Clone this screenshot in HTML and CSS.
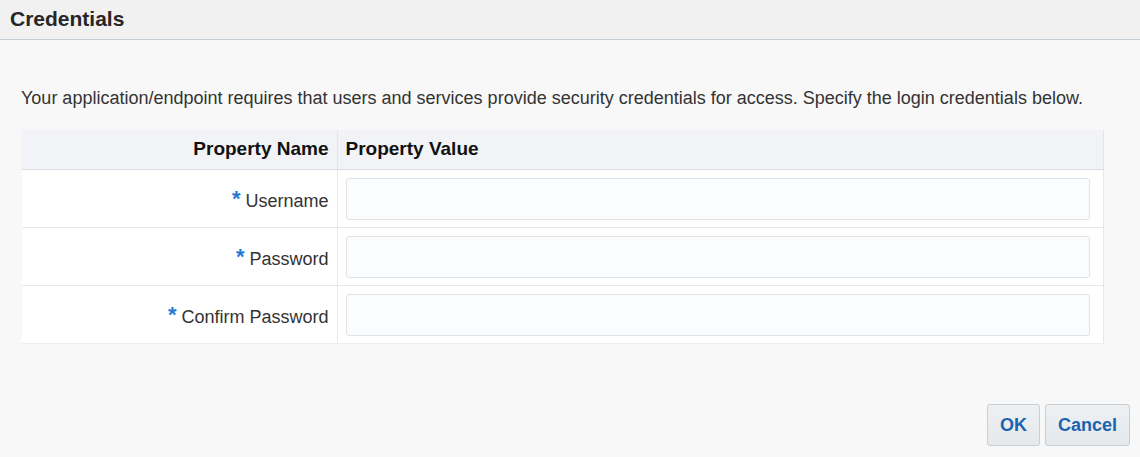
FILE: index.html
```html
<!DOCTYPE html>
<html>
<head>
<meta charset="utf-8">
<link rel="stylesheet" href="styles.css">
</head>
<body>
<div class="dialog">
  <div class="titlebar"><h1 class="title">Credentials</h1></div>
  <div class="content">
    <p class="intro">Your application/endpoint requires that users and services provide security credentials for access. Specify the login credentials below.</p>
    <table class="props">
      <thead>
        <tr><th class="c-name">Property Name</th><th class="c-value">Property Value</th></tr>
      </thead>
      <tbody>
        <tr><td class="c-name"><span class="req">*</span> Username</td><td class="c-value"><input class="field" type="text"></td></tr>
        <tr><td class="c-name"><span class="req">*</span> Password</td><td class="c-value"><input class="field" type="password"></td></tr>
        <tr><td class="c-name"><span class="req">*</span> Confirm Password</td><td class="c-value"><input class="field" type="password"></td></tr>
      </tbody>
    </table>
  </div>
  <div class="actions">
    <button class="btn btn-ok">OK</button>
    <button class="btn btn-cancel">Cancel</button>
  </div>
</div>
</body>
</html>
```
FILE: styles.css
```css
* { box-sizing: border-box; }
html, body { margin: 0; padding: 0; }
body {
  background: #f8f8f8;
  font-family: "Liberation Sans", Arial, sans-serif;
  color: #333;
  width: 1140px;
  height: 457px;
  overflow: hidden;
}
.dialog { display: flex; flex-direction: column; height: 457px; }
.titlebar {
  height: 40px;
  background: #f1f1f1;
  border-bottom: 1px solid #c5cfd8;
  padding: 0 10px;
  display: flex;
  align-items: center;
}
.title {
  margin: 0;
  font-size: 21px;
  font-weight: bold;
  color: #262626;
  position: relative;
  top: -1px;
}
.content { padding: 48px 36px 0 22px; }
.intro {
  margin: 0 0 22px -1px;
  font-size: 18px;
  line-height: 20px;
  color: #333;
}
.props {
  width: 1082px;
  border-collapse: collapse;
  background: #fff;
}
.props th {
  background: #f1f3f7;
  height: 39px;
  font-size: 19px;
  font-weight: bold;
  color: #111;
  border-bottom: 1px solid #d6dde3;
  padding: 0 8px;
}
.props th.c-name { text-align: right; width: 315px; border-right: 1px solid #e2e6ea; }
.props th.c-value { text-align: left; border-right: 1px solid #e2e6ea; }
.props td {
  height: 58px;
  border-bottom: 1px solid #e6e8ea;
  padding: 0 8px;
  font-size: 18px;
  color: #333;
}
.props td.c-name { text-align: right; border-right: 1px solid #e6e8ea; padding-top: 4px; }
.props td.c-value { border-right: 1px solid #e6e8ea; padding-right: 13px; padding-top: 1px; }
.props tbody tr:last-child td { border-bottom: 1px solid #eceeef; }
.req { color: #1f7bd6; font-size: 22px; font-weight: bold; vertical-align: 1px; line-height: 1; }
.field {
  display: block;
  width: 100%;
  height: 42px;
  border: 1px solid #dfe3e6;
  border-radius: 3px;
  background: #fbfcfd;
  margin: 0;
  outline: none;
}
.actions {
  margin-top: auto;
  display: flex;
  justify-content: flex-end;
  gap: 5px;
  padding: 0 10px 11px 0;
}
.btn {
  height: 42px;
  border: 1px solid #c7ced4;
  border-radius: 3px;
  background: linear-gradient(#eef0f2, #e5e9ec);
  color: #1a63b0;
  font-family: "Liberation Sans", Arial, sans-serif;
  font-size: 18px;
  font-weight: bold;
  padding: 0;
}
.btn-ok { width: 53px; }
.btn-cancel { width: 85px; }
```
